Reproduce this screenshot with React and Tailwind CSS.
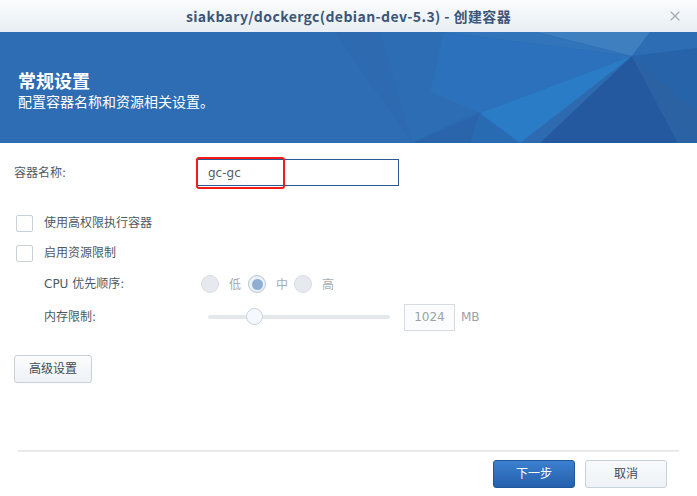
import { X } from "lucide-react";

const body = { fontFamily: '"DejaVu Sans", "Noto Sans CJK SC", sans-serif' };
const cjk = { fontFamily: '"Noto Sans CJK SC", "DejaVu Sans", sans-serif' };

function BannerArt() {
  // faceted polygon background on the right side of the banner
  return (
    <svg className="absolute inset-0 w-full h-full" viewBox="0 0 697 111" preserveAspectRatio="none">
      <polygon points="335,0 697,0 697,111 412,111" fill="#2c67ae" opacity="0.5" />
      <polygon points="440,0 632,24 470,83 412,111 380,0" fill="#2e6fb6" opacity="0.5" />
      <polygon points="537,0 650,0 632,24" fill="#3f7fc0" />
      <polygon points="650,0 697,0 697,16 632,24" fill="#2c6db3" />
      <polygon points="444,0 537,0 632,24" fill="#3174b9" />
      <polygon points="480,81 632,24 520,111 470,111" fill="#2b7cc6" />
      <polygon points="444,0 632,24 480,81 430,60" fill="#2c72bc" opacity="0.85" />
      <polygon points="632,24 540,111 678,111" fill="#2459a0" />
      <polygon points="632,24 697,16 697,80" fill="#2763a9" />
      <polygon points="632,24 697,80 697,111 678,111" fill="#2b62a3" />
      <polygon points="480,81 520,111 412,111" fill="#2964a9" opacity="0.7" />
    </svg>
  );
}

function Checkbox({ label }) {
  return (
    <div className="flex items-center h-[30px] pl-[16px]">
      <span className="w-[17px] h-[17px] border border-[#c9d0d7] rounded-[2px] bg-white" />
      <span className="ml-[11px] text-[12px] text-[#4f5863]">{label}</span>
    </div>
  );
}

function Radio({ checked, label, gap }) {
  return (
    <div className="flex items-center">
      <span
        className={`w-[18px] h-[18px] rounded-full border flex items-center justify-center ${
          checked ? "border-[#b4c6da] bg-[#eef2f6]" : "border-[#d9dee4] bg-[#e6e9ed]"
        }`}
      >
        {checked && <span className="w-[11px] h-[11px] rounded-full bg-[#8eaed2]" />}
      </span>
      <span className={`ml-[10px] text-[12px] text-[#a3abb3] ${gap}`} style={cjk}>
        {label}
      </span>
    </div>
  );
}

export default function App() {
  return (
    <div className="w-[697px] h-[496px] bg-white flex flex-col overflow-hidden relative" style={body}>
      {/* title bar */}
      <div className="h-[32px] flex items-center justify-center relative bg-gradient-to-b from-[#fbfcfd] to-[#e8eef4]">
        <span className="text-[14px] font-semibold text-[#3c5677] tracking-[0.4px]" style={cjk}>
          siakbary/dockergc(debian-dev-5.3) - 创建容器
        </span>
        <X className="absolute right-[14px] top-[8px] text-[#a6aaae]" size={16} strokeWidth={1.75} />
      </div>

      {/* banner */}
      <div className="h-[111px] relative bg-[#2e6cb3] overflow-hidden">
        <BannerArt />
        <div className="relative pl-[18px] pt-[36px] text-white" style={cjk}>
          <div className="text-[18px] font-bold leading-[24px]">常规设置</div>
          <div className="text-[14px] leading-[18px]">配置容器名称和资源相关设置。</div>
        </div>
      </div>

      {/* form */}
      <div className="flex flex-col">
        <div className="flex items-center mt-[16px] pl-[14px]">
          <span className="w-[182px] text-[12px] text-[#4f5863]">容器名称:</span>
          <div className="relative">
            <div className="w-[203px] h-[27px] border border-[#2a5a94] flex items-center pl-[11px] text-[12px] text-[#555c63]">
              gc-gc
            </div>
            <div className="absolute left-0 top-[-2px] w-[89px] h-[32px] border-2 border-[#f5191b] rounded-[3px]" />
          </div>
        </div>

        <div className="mt-[22px]">
          <Checkbox label="使用高权限执行容器" />
          <Checkbox label="启用资源限制" />
        </div>

        <div className="flex items-center h-[32px] pl-[44px]">
          <span className="w-[157px] text-[12px] text-[#4f5863]">CPU 优先顺序:</span>
          <Radio label="低" gap="mr-[7px]" />
          <Radio label="中" checked gap="mr-[6px]" />
          <Radio label="高" />
        </div>

        <div className="flex items-center h-[34px] pl-[44px]">
          <span className="w-[164px] text-[12px] text-[#4f5863]">内存限制:</span>
          <div className="relative w-[182px] h-[4px] rounded-full bg-[#e3e8ed]">
            <span className="absolute left-[38px] top-[-7px] w-[17px] h-[17px] rounded-full border border-[#c5d1dd] bg-[#f5f9fd]" />
          </div>
          <div className="ml-[14px] w-[51px] h-[27px] border border-[#d6dce2] bg-[#fbfcfd] flex items-center justify-center text-[12px] text-[#9aa2aa]">
            1024
          </div>
          <span className="ml-[6px] text-[12px] text-[#9aa2aa]">MB</span>
        </div>

        <div className="pl-[14px] mt-[21px]">
          <button className="w-[78px] h-[28px] rounded-[3px] border border-[#c8d1da] bg-gradient-to-b from-[#fbfcfd] to-[#eef2f6] text-[12px] text-[#3f4a56]">
            高级设置
          </button>
        </div>
      </div>

      {/* footer */}
      <div className="mt-auto pb-[8px]">
        <div className="mx-[18px] h-[2px] bg-gradient-to-b from-[#e2e2e2] to-[#f2f2f2]" />
        <div className="flex justify-end gap-[10px] pr-[30px] mt-[8px]">
          <button className="w-[82px] h-[28px] rounded-[3px] border border-[#1f579c] bg-gradient-to-b from-[#3b80d0] to-[#2560ac] text-[12px] text-white">
            下一步
          </button>
          <button className="w-[82px] h-[28px] rounded-[3px] border border-[#c8d1da] bg-gradient-to-b from-[#f8fafc] to-[#eef2f6] text-[12px] text-[#3f4a56]">
            取消
          </button>
        </div>
      </div>
    </div>
  );
}
